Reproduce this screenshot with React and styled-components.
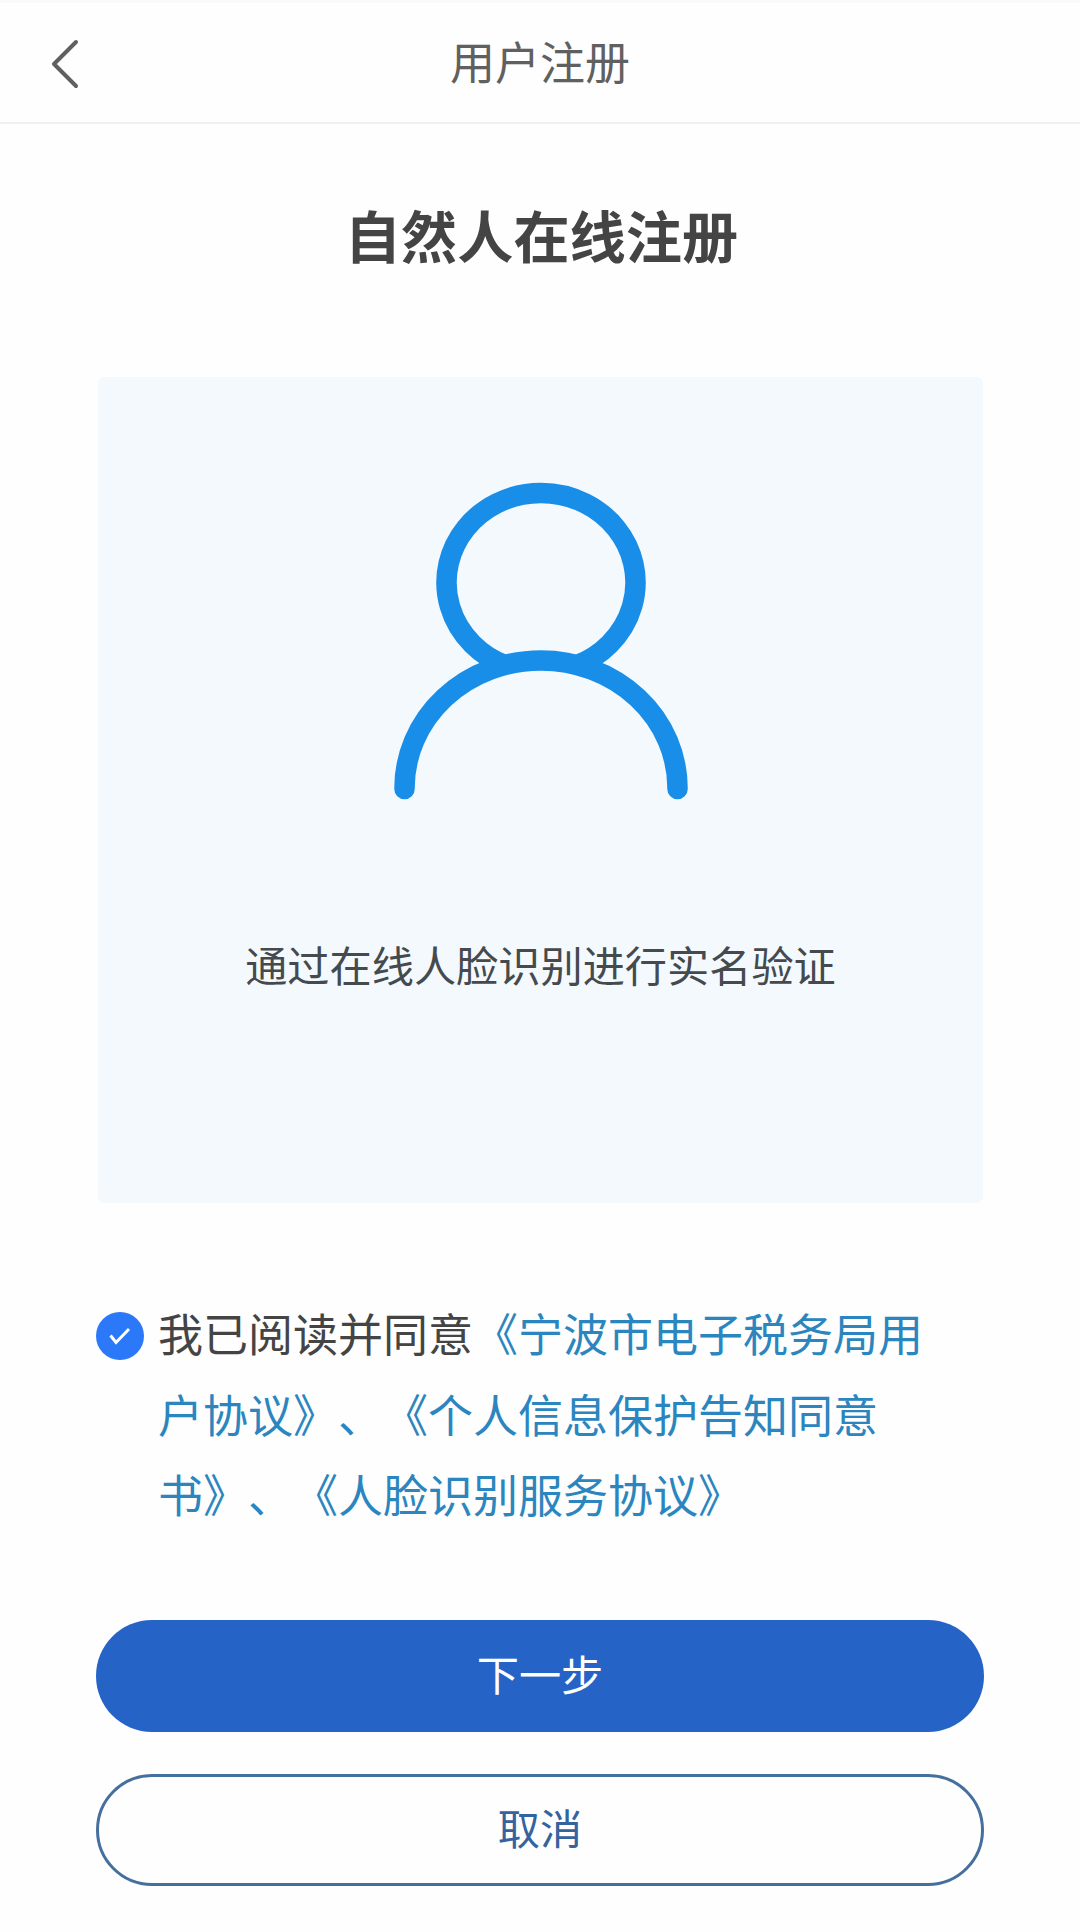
import React, { useState } from 'react'
import styled, { createGlobalStyle } from 'styled-components'

const GlobalStyle = createGlobalStyle`
  * {
    box-sizing: border-box;
  }
  body {
    margin: 0;
    background: #fefefe;
    font-family: 'Noto Sans CJK SC', sans-serif;
    text-spacing-trim: space-all;
  }
`

const Page = styled.div`
  display: flex;
  flex-direction: column;
  height: 1932px;
  border-top: 3px solid #fafafa;
  overflow: hidden;
`

const NavBar = styled.header`
  display: grid;
  grid-template-columns: 130px 1fr 130px;
  align-items: center;
  height: 121px;
  border-bottom: 2px solid #f0f0f0;
`

const BackButton = styled.button`
  display: flex;
  width: 50px;
  margin-left: 40px;
  padding: 2px 0 0;
  border: 0;
  background: none;
`

const NavTitle = styled.div`
  padding-bottom: 3px;
  color: #606060;
  font-size: 45px;
  line-height: 64px;
  text-align: center;
`

const Content = styled.main`
  display: flex;
  flex-direction: column;
  padding: 0 96px;
`

const Heading = styled.h1`
  margin: 70px 0 0;
  padding-left: 3px;
  color: #444;
  font-size: 56.2px;
  font-weight: 700;
  line-height: 80px;
  text-align: center;
`

const Card = styled.section`
  display: flex;
  flex-direction: column;
  align-items: center;
  height: 826px;
  margin: 103px 1px 0 2px;
  padding-top: 96px;
  border-radius: 6px;
  background: #f4f9fd;
`

const CardText = styled.p`
  margin: 125px 0 0;
  color: #444a4d;
  font-size: 42.2px;
  line-height: 60px;
`

const Agreement = styled.div`
  display: flex;
  gap: 14px;
  margin-top: 90px;
`

const Check = styled.button`
  display: flex;
  flex: none;
  width: 48px;
  height: 48px;
  margin-top: 19px;
  padding: 0;
  border: 0;
  border-radius: 50%;
  background: ${props => (props.$checked ? '#2b78f8' : '#d5d9de')};
`

const AgreementText = styled.p`
  width: 780px;
  margin: 0;
  color: #444;
  font-size: 45px;
  line-height: 80.6px;
`

const Link = styled.span`
  color: #2b86bf;
`

const Actions = styled.div`
  display: flex;
  flex-direction: column;
  gap: 42px;
  margin-top: 85px;
`

const PillButton = styled.button`
  height: 112px;
  padding: 0 0 6px;
  border: ${props => (props.$primary ? '0' : '3px solid #456f9c')};
  border-radius: 56px;
  background: ${props => (props.$primary ? '#2563c7' : 'transparent')};
  color: ${props => (props.$primary ? '#fff' : '#34639f')};
  font-family: inherit;
  font-size: 42.2px;
  line-height: 60px;
`

const BackIcon = () => (
  <svg width="50" height="60" viewBox="0 0 50 60" fill="none">
    <path d="M36 8 L14 30 L36 52" stroke="#606060" strokeWidth="4" strokeLinecap="round" strokeLinejoin="round" />
  </svg>
)

const PersonIcon = () => (
  <svg width="300" height="336" viewBox="390 473 300 336" fill="none" stroke="#188ee8" strokeWidth="20.5">
    <path d="M505 665.6 A94.5 89.5 0 1 1 575 665.6" />
    <path d="M403.5 789 V788 A136.5 127.5 0 0 1 676.5 788 V789" strokeLinecap="round" />
  </svg>
)

const CheckIcon = () => (
  <svg width="48" height="48" viewBox="0 0 48 48" fill="none">
    <path d="M14.5 23.5 L20 30.5 L33 17" stroke="#fff" strokeWidth="3" />
  </svg>
)

function App() {
  const [checked, setChecked] = useState(true)

  return (
    <Page>
      <GlobalStyle />
      <NavBar>
        <BackButton aria-label="返回">
          <BackIcon />
        </BackButton>
        <NavTitle>用户注册</NavTitle>
      </NavBar>
      <Content>
        <Heading>自然人在线注册</Heading>
        <Card>
          <PersonIcon />
          <CardText>通过在线人脸识别进行实名验证</CardText>
        </Card>
        <Agreement>
          <Check $checked={checked} onClick={() => setChecked(!checked)} aria-label="同意">
            {checked && <CheckIcon />}
          </Check>
          <AgreementText>
            我已阅读并同意<Link>《宁波市电子税务局用户协议》、《个人信息保护告知同意书》、《人脸识别服务协议》</Link>
          </AgreementText>
        </Agreement>
        <Actions>
          <PillButton $primary>下一步</PillButton>
          <PillButton>取消</PillButton>
        </Actions>
      </Content>
    </Page>
  )
}

export default App
